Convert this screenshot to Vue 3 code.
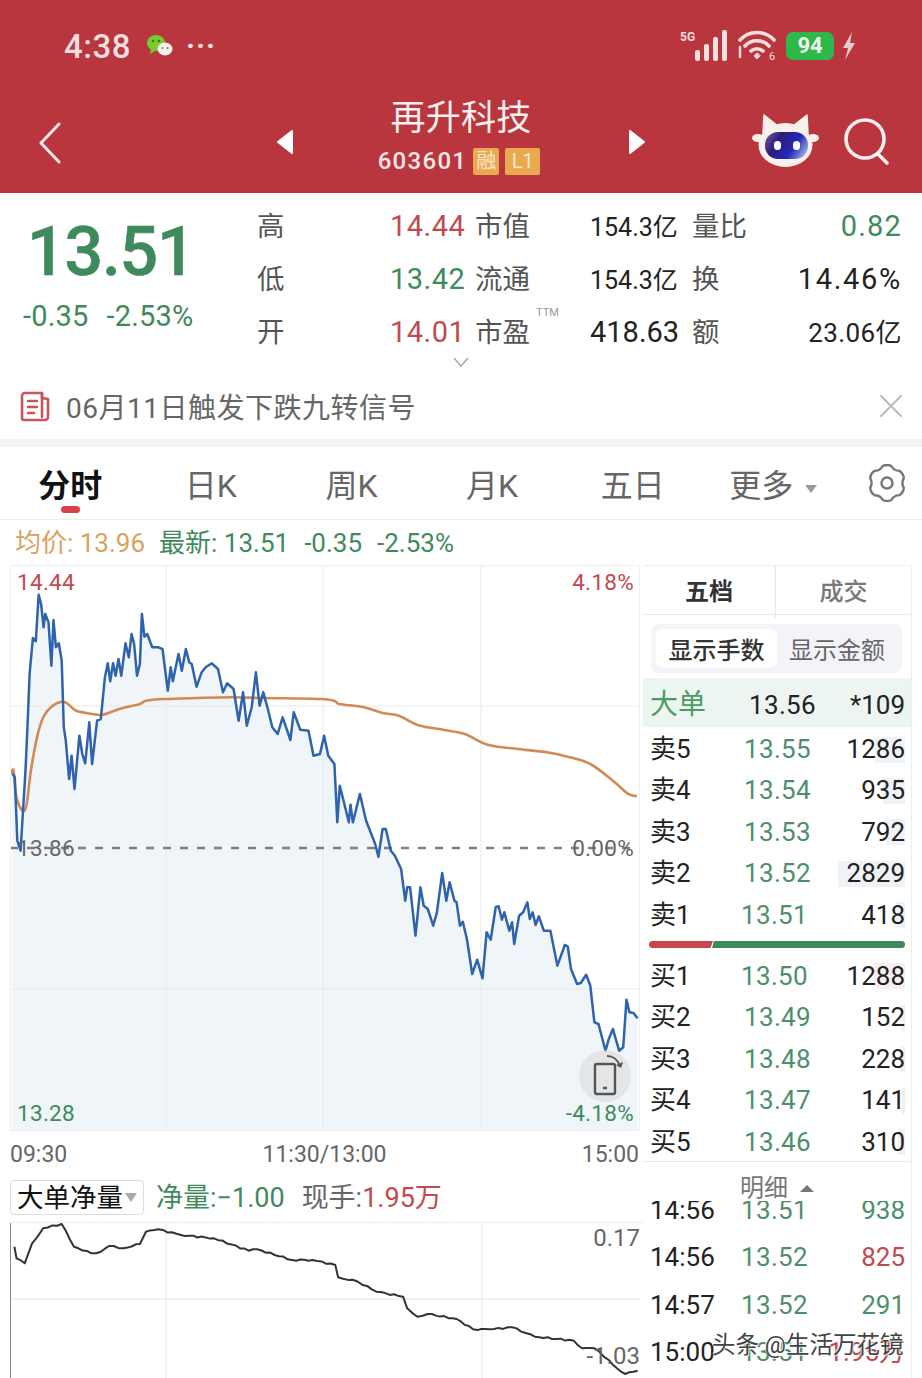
<template>
  <div class="page">
    <header class="head">
      <div class="status">
        <div class="status-left">
          <span class="clock">4:38</span>
          <svg class="wechat" width="28" height="24" viewBox="0 0 28 24">
            <ellipse cx="10" cy="9" rx="9" ry="8" fill="#79c92f" />
            <path d="M5 15l-1 5 5-3z" fill="#79c92f" />
            <ellipse cx="19" cy="15" rx="7.5" ry="6.5" fill="#f5efe9" />
            <circle cx="7" cy="7" r="1.3" fill="#2f7a18" />
            <circle cx="13" cy="7" r="1.3" fill="#2f7a18" />
            <circle cx="16.5" cy="14" r="1" fill="#777" />
            <circle cx="21.5" cy="14" r="1" fill="#777" />
          </svg>
          <span class="dots">···</span>
        </div>
        <div class="status-right">
          <svg class="signal" width="48" height="34" viewBox="0 0 48 34">
            <text x="0" y="12" class="tiny5g">5G</text>
            <g fill="#f3dfdf">
              <rect x="15" y="21" width="5" height="11" rx="2" />
              <rect x="24" y="15" width="5" height="17" rx="2" />
              <rect x="33" y="8" width="5" height="24" rx="2" />
              <rect x="42" y="1" width="5" height="31" rx="2" />
            </g>
          </svg>
          <svg width="40" height="34" viewBox="0 0 40 34" fill="none" stroke="#f3dfdf" stroke-width="3.6" stroke-linecap="round">
            <path d="M2 11c9-10 25-10 34 0" />
            <path d="M7 17c6-7 18-7 24 0" />
            <path d="M13 22c4-3 8-3 12 0" />
            <path d="M19 24l-3 3 3 3 3-3z" fill="#f3dfdf" stroke-width="1" />
            <path d="M2 18v10" stroke-width="2.4" />
            <text x="31" y="31" class="tiny6">6</text>
          </svg>
          <span class="battery">94</span>
          <svg width="14" height="28" viewBox="0 0 14 28"><path d="M10 0L1 16h5l-3 12 10-17H8z" fill="#e9c9c9" /></svg>
        </div>
      </div>
      <div class="nav">
        <div class="nav-left">
          <svg width="24" height="42" viewBox="0 0 24 42" fill="none" stroke="#f6e6e6" stroke-width="3" stroke-linecap="round" stroke-linejoin="round">
            <path d="M21 2L3 21l18 19" />
          </svg>
        </div>
        <div class="nav-mid">
          <svg width="18" height="26" viewBox="0 0 18 26"><path d="M16 2v22L2 13z" fill="#fff" stroke="#fff" stroke-width="2" stroke-linejoin="round" /></svg>
          <div class="title-box">
            <div class="title">再升科技</div>
            <div class="code-row">
              <span class="code">603601</span>
              <span class="badge b1">融</span>
              <span class="badge b2">L1</span>
            </div>
          </div>
          <svg width="18" height="26" viewBox="0 0 18 26"><path d="M2 2v22l14-11z" fill="#fff" stroke="#fff" stroke-width="2" stroke-linejoin="round" /></svg>
        </div>
        <div class="nav-right">
          <svg width="68" height="54" viewBox="0 0 68 54">
            <defs>
              <linearGradient id="face" x1="0" y1="0.2" x2="1" y2="0.6">
                <stop offset="0" stop-color="#6f4f9f" />
                <stop offset="0.3" stop-color="#2c1b78" />
                <stop offset="0.7" stop-color="#2528b8" />
                <stop offset="1" stop-color="#8f9fe0" />
              </linearGradient>
            </defs>
            <path d="M12 1l14 11-15 7zM55 1L41 12l15 7z" fill="#f8f0ec" stroke="#f8f0ec" stroke-width="1.5" stroke-linejoin="round" />
            <ellipse cx="33.5" cy="31" rx="27" ry="22" fill="#f8f0ec" />
            <ellipse cx="6" cy="24" rx="6" ry="4" fill="#f8f0ec" />
            <ellipse cx="61" cy="24" rx="6" ry="4" fill="#f8f0ec" />
            <rect x="13" y="18" width="43" height="27" rx="13" fill="url(#face)" />
            <rect x="22" y="27" width="7" height="9" rx="3.5" fill="#fff" />
            <rect x="41" y="27" width="7" height="9" rx="3.5" fill="#fff" />
          </svg>
          <svg class="search" width="48" height="48" viewBox="0 0 48 48" fill="none" stroke="#fbeeee" stroke-width="3.6" stroke-linecap="round">
            <circle cx="22" cy="21" r="19" />
            <path d="M35 36l9 9" />
          </svg>
        </div>
      </div>
    </header>

    <section class="quote">
      <div class="quote-main">
        <div class="last">13.51</div>
        <div class="chg"><span>-0.35</span><span>-2.53%</span></div>
      </div>
      <div class="stats">
        <div v-for="r in stats" :key="r.a" class="stat-row">
          <span class="lbl">{{ r.a }}</span>
          <span class="num" :class="r.cls">{{ r.b }}</span>
          <span class="lbl">{{ r.c }}<sup v-if="r.ttm" class="ttm">TTM</sup></span>
          <span class="num mid" :class="{ big: r.ttm }">{{ r.d }}</span>
          <span class="lbl">{{ r.e }}</span>
          <span class="num end" :class="[r.fcls]">{{ r.f }}</span>
        </div>
      </div>
      <svg class="more" width="18" height="12" viewBox="0 0 18 12" fill="none" stroke="#aaa" stroke-width="1.6"><path d="M2 2l7 8 7-8" /></svg>
    </section>

    <div class="notice">
      <svg width="30" height="32" viewBox="0 0 30 32" fill="none" stroke="#c9555a" stroke-width="2.6" stroke-linecap="round" stroke-linejoin="round">
        <path d="M22 3H5a3 3 0 0 0-3 3v22a2 2 0 0 0 2 2h21a3 3 0 0 0 3-3V9l-6-1z" />
        <path d="M22 3v24M8 11h9M8 17h9M8 23h6" />
      </svg>
      <span class="notice-text">06月11日触发下跌九转信号</span>
      <svg class="close" width="24" height="24" viewBox="0 0 24 24" stroke="#bbb" stroke-width="2" stroke-linecap="round"><path d="M2 2l20 20M22 2L2 22" /></svg>
    </div>
    <div class="gap"></div>

    <nav class="tabs">
      <div class="tab-list">
        <div v-for="(t, i) in tabs" :key="t" class="tab" :class="{ on: i === 0 }">
          {{ t }}<i v-if="i === 5" class="more-caret"></i>
        </div>
      </div>
      <svg width="38" height="38" viewBox="0 0 38 38" fill="none" stroke="#777" stroke-width="2.4" stroke-linejoin="round">
        <path :d="gear" />
        <circle cx="19" cy="19" r="5.5" />
      </svg>
    </nav>

    <div class="infoline">
      <span class="avg">均价: 13.96</span>
      <span class="up">最新: 13.51</span>
      <span class="up">-0.35</span>
      <span class="up">-2.53%</span>
    </div>

    <main class="main">
      <div class="left">
        <div class="chart">
          <svg class="canvas" width="630" height="566" viewBox="0 0 630 566">
            <path :d="priceFill" fill="#f0f5f9" />
            <g stroke="#e6ebef" stroke-width="1">
              <path d="M156 0v566M313 0v566M471 0v566M0 141h630M0 424h630" />
            </g>
            <path d="M0 283h630" stroke="#7c8084" stroke-width="2.4" stroke-dasharray="8 9" />
            <path :d="avgLine" fill="none" stroke="#d18a55" stroke-width="2.6" stroke-linejoin="round" />
            <path :d="priceLine" fill="none" stroke="#2f63ad" stroke-width="2.5" stroke-linejoin="round" />
          </svg>
          <span class="tag tl red">14.44</span>
          <span class="tag tr red">4.18%</span>
          <span class="tag ml gray">13.86</span>
          <span class="tag mr gray">0.00%</span>
          <span class="tag bl green">13.28</span>
          <span class="tag br green">-4.18%</span>
          <div class="rotate">
            <svg width="52" height="52" viewBox="0 0 52 52" fill="none" stroke="#555" stroke-width="2.4">
              <rect x="16" y="14" width="20" height="30" rx="2" />
              <path d="M24 38h4" />
              <path d="M28 6c6 0 11 4 13 10" stroke-width="2" />
              <path d="M37 15l5 3 2-6z" fill="#555" stroke="none" />
            </svg>
          </div>
        </div>
        <div class="times"><span>09:30</span><span>11:30/13:00</span><span>15:00</span></div>
        <div class="vol-bar">
          <div class="picker">大单净量<i class="picker-caret"></i></div>
          <span class="vol-a">净量:−1.00</span>
          <span class="vol-b">现手:<em>1.95万</em></span>
        </div>
        <div class="flow">
          <svg class="canvas" width="630" height="155" viewBox="0 0 630 155">
            <path d="M156 0v155M472 0v155M0 76h630" stroke="#e6e6e6" stroke-width="1" />
            <path d="M0.5 0v155" stroke="#888" stroke-width="1" />
            <path :d="flowLine" fill="none" stroke="#333" stroke-width="2" stroke-linejoin="round" />
          </svg>
          <span class="flow-top">0.17</span>
          <span class="flow-low">-1.03</span>
        </div>
      </div>

      <aside class="book">
        <div class="book-tabs"><span class="on">五档</span><span>成交</span></div>
        <div class="seg"><span class="on">显示手数</span><span>显示金额</span></div>
        <div class="big-row">
          <span class="big-lbl">大单</span>
          <span class="pr dark shift-r">13.56</span>
          <span class="qty">*109</span>
        </div>
        <div v-for="r in sells" :key="r.l" class="row">
          <span>{{ r.l }}</span>
          <span class="pr" :class="{ 'shift-l': r.s }">{{ r.p }}</span>
          <span class="qty"><i class="depth" :style="{ width: r.w + 'px' }"></i><b>{{ r.q }}</b></span>
        </div>
        <div class="ratio"><i class="ratio-r"></i><i class="ratio-g"></i></div>
        <div v-for="r in buys" :key="r.l" class="row">
          <span>{{ r.l }}</span>
          <span class="pr" :class="{ 'shift-l': r.s }">{{ r.p }}</span>
          <span class="qty"><i class="depth buy" :style="{ width: r.w + 'px' }"></i><b>{{ r.q }}</b></span>
        </div>
        <div class="detail-head">明细<i class="detail-caret"></i></div>
        <div class="details">
          <div v-for="d in details" :key="d.t" class="d-row">
            <span>{{ d.t }}</span>
            <span class="pr">{{ d.p }}</span>
            <span class="d-qty" :class="d.c">{{ d.q }}</span>
          </div>
        </div>
      </aside>
    </main>
    <div class="watermark">头条 @生活万花镜</div>
  </div>
</template>

<script setup>
const stats = [
  { a: '高', b: '14.44', cls: 'red', c: '市值', d: '154.3亿', e: '量比', f: '0.82', fcls: 'green' },
  { a: '低', b: '13.42', cls: 'green', c: '流通', d: '154.3亿', e: '换', f: '14.46%', fcls: '' },
  { a: '开', b: '14.01', cls: 'red', c: '市盈', ttm: true, d: '418.63', e: '额', f: '23.06亿', fcls: 'small' },
]
const tabs = ['分时', '日K', '周K', '月K', '五日', '更多']

function depthRows(prefix, rows) {
  return rows.map(([n, p, q, s]) => ({
    l: prefix + n, p, q, s,
    w: Math.round((Number(q) / 2829) * 67),
  }))
}
const sells = depthRows('卖', [
  [5, '13.55', '1286'], [4, '13.54', '935'], [3, '13.53', '792'],
  [2, '13.52', '2829'], [1, '13.51', '418', true],
])
const buys = depthRows('买', [
  [1, '13.50', '1288', true], [2, '13.49', '152'], [3, '13.48', '228'],
  [4, '13.47', '141'], [5, '13.46', '310'],
])
const details = [
  { t: '14:56', p: '13.51', q: '938', c: 'green' },
  { t: '14:56 ', p: '13.52', q: '825', c: 'red' },
  { t: '14:57', p: '13.52', q: '291', c: 'green' },
  { t: '15:00', p: '13.51', q: '1.95万', c: 'red' },
]

// traced off the reference, x in 2.431 units per px and y in 3 units per px
const sx = 2.431
const upperA = [[30,628],[36,640],[42,830],[50,860],[56,740],[62,620],[68,450],[72,330],[80,222],[87,232],[94,92],[100,120],[106,190],[110,150],[118,175],[125,305],[130,168],[136,250],[143,238],[150,290],[155,490],[160,530],[168,645],[174,575],[181,675],[193,515],[200,570],[207,598],[217,475],[224,600],[236,470],[245,465],[255,340],[262,298],[268,352],[275,298],[281,335],[288,285],[295,335],[305,238],[313,280],[320,210],[326,240],[333,335],[340,300],[345,150],[351,218],[358,210],[370,250],[385,250],[395,255],[408,380],[415,310],[420,352],[434,270],[442,320],[452,255],[460,295],[466,300],[478,368],[490,325],[500,310],[515,298],[530,315],[542,385],[552,358],[568,375],[580,470],[591,385],[600,485],[612,430],[622,325],[631,425],[640,385],[650,430],[662,490],[675,510],[687,460],[706,528],[714,445],[730,497],[750,500],[762,575],[778,570],[788,515],[798,575],[813,600],[820,775],[826,665],[836,715],[848,775],[852,722],[858,775],[875,690],[890,770],[912,840],[920,878],[930,795],[938,795],[950,860]]
const upperB = [[950,5],[960,20],[975,60],[985,155],[990,115],[997,115],[1010,260],[1022,115],[1030,170],[1040,180],[1053,230],[1062,190],[1075,72],[1085,155],[1093,100],[1105,155],[1110,160],[1118,230],[1125,218],[1135,270],[1148,375],[1160,332],[1173,388],[1183,250],[1193,272],[1205,175],[1212,172],[1220,212],[1226,190],[1238,245],[1245,220],[1250,285],[1262,200],[1272,190],[1282,160],[1288,210],[1295,190],[1302,228],[1310,202],[1322,245],[1338,245],[1355,350],[1373,288],[1380,292],[1388,360],[1403,405],[1412,402],[1425,377],[1435,410],[1445,520],[1455,525],[1472,605],[1480,570],[1490,540],[1505,605],[1515,595],[1523,452],[1530,490],[1540,492],[1550,508]]
const avg = [[28,628],[33,620],[40,700],[55,740],[65,720],[75,620],[90,520],[105,460],[125,428],[150,413],[165,420],[185,440],[225,450],[250,452],[290,435],[340,420],[355,410],[400,405],[480,402],[560,400],[640,402],[780,405],[815,412],[825,420],[885,430],[930,447],[970,455],[1015,483],[1080,498],[1130,510],[1185,542],[1260,555],[1330,565],[1380,578],[1435,600],[1490,650],[1525,688],[1548,697]]
const flow = [[35,350],[40,385],[60,400],[78,340],[105,295],[150,282],[180,350],[222,370],[245,365],[265,348],[300,355],[340,342],[355,305],[385,298],[440,315],[520,325],[605,362],[625,358],[710,390],[760,390],[815,405],[822,442],[870,455],[915,485],[980,500],[990,535],[1015,560],[1040,552],[1110,567],[1150,598],[1190,598],[1245,592],[1300,620],[1395,632],[1415,655],[1445,655],[1480,690],[1500,715],[1520,732],[1550,722]]

const toPath = (pts) => 'M' + pts.map(([x, y]) => `${x.toFixed(1)} ${y.toFixed(1)}`).join('L')
const mapPts = (pts, off) => pts.map(([x, y]) => [x / sx - 10, y / 3 + off])

// catmull-rom, the average line has no corners
function smooth(pts) {
  let d = `M${pts[0][0].toFixed(1)} ${pts[0][1].toFixed(1)}`
  for (let i = 0; i < pts.length - 1; i++) {
    const a = pts[Math.max(i - 1, 0)]
    const b = pts[i]
    const c = pts[i + 1]
    const e = pts[Math.min(i + 2, pts.length - 1)]
    d += `C${(b[0] + (c[0] - a[0]) / 6).toFixed(1)} ${(b[1] + (c[1] - a[1]) / 6).toFixed(1)} ${(c[0] - (e[0] - b[0]) / 6).toFixed(1)} ${(c[1] - (e[1] - b[1]) / 6).toFixed(1)} ${c[0].toFixed(1)} ${c[1].toFixed(1)}`
  }
  return d
}

// breaks long segments up with a small fixed wobble, the flow line is jagged
function roughen(pts) {
  const out = []
  pts.forEach((p, i) => {
    out.push(p)
    const q = pts[i + 1]
    if (!q) return
    const n = Math.floor((q[0] - p[0]) / 4)
    for (let k = 1; k < n; k++) {
      const t = k / n
      const wob = Math.sin(k * 2.3 + i * 1.7) * 0.8
      out.push([p[0] + (q[0] - p[0]) * t, p[1] + (q[1] - p[1]) * t + wob])
    }
  })
  return out
}

const pricePts = [...mapPts(upperA, -1), ...mapPts(upperB, 284)]
const priceLine = toPath(pricePts)
const priceFill = priceLine + `L${pricePts[pricePts.length - 1][0].toFixed(1)} 566L2 566Z`
const avgLine = smooth(mapPts(avg, -1))
const flowLine = toPath(roughen(mapPts(flow, -93)))

// six lobes, point up, softened by the curve control points
function gearShape() {
  let d = ''
  for (let i = 0; i < 6; i++) {
    const a = (i * Math.PI) / 3 - Math.PI / 2
    const p = (r, t) => `${(19 + r * Math.cos(a + t)).toFixed(1)} ${(19 + r * Math.sin(a + t)).toFixed(1)}`
    d += (i ? 'L' : 'M') + p(17.5, -0.24) + 'Q' + p(19, 0) + ' ' + p(17.5, 0.24) + 'Q' + p(14, 0.52) + ' ' + p(17.5, 0.8)
  }
  return d + 'Z'
}
const gear = gearShape()
</script>

<style>
html, body { margin: 0; background: #fff; }
</style>

<style scoped>
.page {
  position: relative; width: 922px; height: 1378px; overflow: hidden; background: #fff;
  font-family: Roboto, "Noto Sans CJK SC", sans-serif; color: #222;
}
.red { color: #c2494e; }
.green { color: #3f8a5c; }
.gray { color: #666; }

.head { height: 193px; background: #b9363f; }
.status { height: 92px; display: flex; justify-content: space-between; align-items: center; padding: 0 66px 0 64px; }
.status-left, .status-right { display: flex; align-items: center; }
.clock { font-size: 33px; font-weight: 500; color: #f1dfdf; letter-spacing: 0.5px; }
.wechat { margin-left: 15px; }
.dots { margin-left: 12px; font-size: 30px; line-height: 20px; font-weight: 700; color: #f1dfdf; letter-spacing: 1px; }
.status-right { gap: 8px; }
.signal { margin-right: 2px; }
.tiny5g { font: 700 12px Roboto, sans-serif; fill: #f3dfdf; }
.tiny6 { font: 400 11px Roboto, sans-serif; fill: #f3dfdf; stroke: none; }
.battery {
  width: 48px; height: 28px; border-radius: 7px; background: #2eb84c; color: #f2f8ef;
  font-size: 22px; font-weight: 700; text-align: center; line-height: 28px;
}

.nav { display: grid; grid-template-columns: 276px 370px 1fr; height: 101px; }
.nav-left { padding: 30px 0 0 38px; }
.nav-mid { display: flex; justify-content: space-between; padding-top: 37px; height: fit-content; }
.title-box { margin-top: -35px; display: flex; flex-direction: column; align-items: center; }
.title { font-size: 35px; line-height: 50px; color: #faf0f0; letter-spacing: 0.3px; }
.code-row { display: flex; align-items: center; gap: 6px; margin: 3px 4px 0 0; }
.code { font-size: 24px; font-weight: 500; color: #f5e6e6; letter-spacing: 1.3px; }
.badge {
  height: 27px; line-height: 27px; border-radius: 2px; background: #e9a94f; color: #f8e7cf;
  font-size: 20px; text-align: center;
}
.b1 { width: 26px; }
.b2 { width: 35px; }
.nav-right { display: flex; align-items: flex-start; padding: 22px 0 0 106px; gap: 23px; }
.search { margin-top: 4px; }

.quote { position: relative; height: 187px; display: flex; }
.quote-main { width: 257px; padding: 19px 0 0 23px; box-sizing: border-box; color: #3f8a5c; }
.last { font-size: 68px; line-height: 80px; font-weight: 500; letter-spacing: -1.2px; padding-left: 4px; -webkit-text-stroke: 0.6px #3f8a5c; }
.chg { display: flex; gap: 18px; font-size: 29px; line-height: 32px; margin-top: 8px; letter-spacing: 0.2px; }
.stats { flex: 1; padding-top: 7px; }
.stat-row {
  display: grid; grid-template-columns: 133px 85px 115px 102px 1fr auto; height: 53px; align-items: baseline;
  line-height: 53px; padding-right: 20px; color: #444;
}
.lbl { font-size: 27.5px; color: #555; position: relative; }
.num { font-size: 29px; letter-spacing: 0.5px; }
.mid { font-size: 25px; color: #222; letter-spacing: 0; }
.mid.big { font-size: 29px; }
.end { color: #222; text-align: right; letter-spacing: 1.7px; }
.end.green { color: #3f8a5c; letter-spacing: 1.2px; }
.end.small { font-size: 26px; letter-spacing: 0.4px; }
.stat-row .red { color: #c2494e; }
.stat-row .green { color: #3f8a5c; }
.ttm { position: absolute; left: 61px; top: 1px; font-size: 11px; line-height: 12px; color: #999; }
.more { position: absolute; left: 452px; top: 163px; }

.notice { height: 59px; display: flex; align-items: center; padding: 0 19px 8px 20px; box-sizing: border-box; }
.notice-text { margin-left: 16px; font-size: 28px; color: #666; letter-spacing: 0.5px; }
.close { margin-left: auto; }
.gap { height: 8px; background: #f3f3f3; }

.tabs { height: 73px; display: flex; align-items: center; border-bottom: 1px solid #ededed; box-sizing: border-box; }
.tab-list { display: grid; grid-template-columns: repeat(6, 140.6px); }
.tab { position: relative; text-align: center; font-size: 32px; color: #666; }
.tab.on { color: #111; font-weight: 700; }
.tab.on::after {
  content: ""; position: absolute; left: 61px; top: 46px; width: 19px; height: 7px; border-radius: 4px; background: #d9424a;
}
.more-caret {
  display: inline-block; margin-left: 12px; vertical-align: 4px;
  border: 6px solid transparent; border-top: 8px solid #999; border-bottom: 0;
}
.tabs > svg { margin-left: 24px; }

.infoline { height: 45px; display: flex; align-items: baseline; line-height: 46px; font-size: 26px; padding-left: 15px; }
.avg { color: #d9a35b; margin-right: 14px; }
.up { color: #3f8a5c; margin-right: 15px; }

.main { display: flex; }
.left { width: 643px; padding-left: 10px; box-sizing: border-box; }
.chart { position: relative; width: 630px; height: 566px; outline: 1px solid #eee; outline-offset: -1px; }
.canvas { display: block; }
.tag { position: absolute; font-size: 22.5px; line-height: 26px; letter-spacing: 0.3px; }
.tl { left: 7px; top: 4px; }
.tr { right: 6px; top: 4px; }
.ml { left: 7px; top: 270px; }
.mr { right: 6px; top: 270px; }
.bl { left: 7px; top: 535px; }
.br { right: 6px; top: 535px; }
.rotate {
  position: absolute; left: 569px; top: 485px; width: 52px; height: 52px; border-radius: 50%;
  background: rgba(218, 218, 218, 0.6);
}
.times {
  display: flex; justify-content: space-between; width: 629px; height: 46px; align-items: center;
  font-size: 23px; color: #666;
}
.vol-bar { display: flex; align-items: baseline; height: 35px; font-size: 27px; line-height: 41px; margin-top: 1px; }
.picker {
  width: 134px; height: 35px; box-sizing: border-box; border: 1px solid #ddd; border-radius: 4px;
  font-size: 26.5px; line-height: 33px; color: #111; padding-left: 6px; white-space: nowrap;
}
.picker-caret {
  display: inline-block; margin-left: 2px; vertical-align: 5px;
  border: 6px solid transparent; border-top: 9px solid #aaa; border-bottom: 0;
}
.vol-a { margin-left: 12px; color: #3f8a5c; }
.vol-b { margin-left: 17px; color: #666; }
.vol-b em { font-style: normal; color: #c2494e; }
.flow { position: relative; margin-top: 9px; height: 155px; border-top: 1px solid #eee; }
.flow-top, .flow-low { position: absolute; right: 3px; font-size: 24px; line-height: 26px; color: #666; }
.flow-top { top: 2px; }
.flow-low { top: 120px; }

.book { width: 269px; border-right: 1px solid #eee; box-sizing: border-box; }
.book-tabs { display: grid; grid-template-columns: 133px 1fr; height: 50px; border-bottom: 1px solid #e8e8e8; border-top: 1px solid #eee; box-sizing: border-box; }
.book-tabs span { text-align: center; line-height: 52px; font-size: 24px; font-weight: 500; color: #777; }
.book-tabs .on { color: #333; border-right: 1px solid #e8e8e8; font-weight: 700; }
.seg {
  margin: 9px 9px 5px 8px; height: 49px; background: #f3f4f8; border-radius: 8px; padding: 5px; box-sizing: border-box;
  display: grid; grid-template-columns: 121px 1fr;
}
.seg span { text-align: center; line-height: 44px; height: 39px; font-size: 24px; color: #666; }
.seg .on { background: #fff; border-radius: 8px; color: #333; font-weight: 500; }
.big-row, .row, .d-row { display: grid; grid-template-columns: 1fr auto 1fr; align-items: baseline; padding: 0 6px 0 7px; }
.big-row { height: 49px; line-height: 54px; background: #edf5f0; font-size: 26px; }
.big-lbl { color: #4d9a66; font-size: 28px; }
.row { height: 41.4px; line-height: 45px; font-size: 26px; color: #222; }
.pr { color: #4d8f6b; letter-spacing: 0.3px; }
.pr.dark { color: #222; }
.shift-r { position: relative; left: 5px; }
.shift-l { position: relative; left: -3px; }
.qty { position: relative; text-align: right; }
.qty b { position: relative; font-weight: 400; }
.depth {
  position: absolute; right: 0; top: 50%; height: 26px; margin-top: -13px; background: #eef3f7;
}
.depth.buy { background: #f8eeee; }
.ratio { display: flex; height: 7px; margin: 7px 6px 6px; }
.ratio-r { width: 64px; background: #c9474c; border-radius: 4px 0 0 4px; clip-path: polygon(0 0, 100% 0, 96% 100%, 0 100%); }
.ratio-g { flex: 1; background: #3f8a5c; border-radius: 0 4px 4px 0; margin-left: -1px; clip-path: polygon(2px 0, 100% 0, 100% 100%, 0 100%); }
.detail-head {
  height: 40px; border-top: 1px solid #e8e8e8; box-sizing: border-box; text-align: center; line-height: 52px;
  font-size: 24px; color: #777;
}
.detail-caret {
  display: inline-block; margin-left: 12px; vertical-align: 4px;
  border: 7px solid transparent; border-bottom: 7px solid #777; border-top: 0;
}
.details { height: 174px; overflow: hidden; }
.d-row { height: 47.5px; line-height: 54px; font-size: 26px; color: #222; }
.d-row:first-child { margin-top: -18px; }
.d-row .pr { position: relative; left: -3px; }
.d-qty { text-align: right; }
.d-qty.red { color: #c2494e; }
.d-qty.green { color: #4d8f6b; }
.watermark {
  position: absolute; left: 712px; top: 1330px; font-size: 23.5px; line-height: 30px; color: #444; white-space: nowrap;
  text-shadow: 1px 1px 0 rgba(255, 255, 255, 0.8), -1px -1px 0 rgba(255, 255, 255, 0.8);
}
</style>
